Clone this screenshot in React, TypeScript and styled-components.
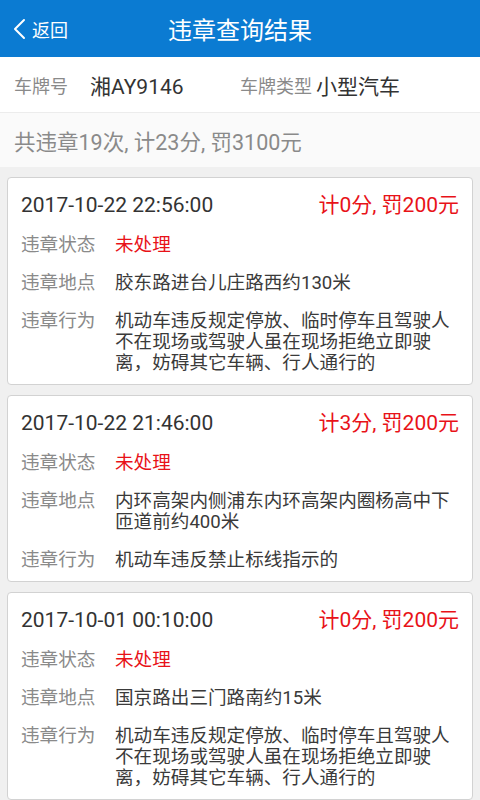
import styled, { createGlobalStyle } from "styled-components";

type Violation = {
  time: string;
  points: number;
  fine: number;
  status: string;
  place: string;
  action: string;
};

const VIOLATIONS: Violation[] = [
  {
    time: "2017-10-22 22:56:00",
    points: 0,
    fine: 200,
    status: "未处理",
    place: "胶东路进台儿庄路西约130米",
    action:
      "机动车违反规定停放、临时停车且驾驶人不在现场或驾驶人虽在现场拒绝立即驶离，妨碍其它车辆、行人通行的",
  },
  {
    time: "2017-10-22 21:46:00",
    points: 3,
    fine: 200,
    status: "未处理",
    place: "内环高架内侧浦东内环高架内圈杨高中下匝道前约400米",
    action: "机动车违反禁止标线指示的",
  },
  {
    time: "2017-10-01 00:10:00",
    points: 0,
    fine: 200,
    status: "未处理",
    place: "国京路出三门路南约15米",
    action:
      "机动车违反规定停放、临时停车且驾驶人不在现场或驾驶人虽在现场拒绝立即驶离，妨碍其它车辆、行人通行的",
  },
];

const GlobalStyle = createGlobalStyle`
  html, body {
    margin: 0;
    padding: 0;
    background: #f0f0f0;
  }
  body {
    font-family: Roboto, "Noto Sans CJK SC", sans-serif;
    -webkit-font-smoothing: antialiased;
  }
`;

const Page = styled.div`
  width: 480px;
  min-height: 800px;
  background: #f0f0f0;
`;

const Header = styled.header`
  height: 57px;
  background: #0b7bd2;
  display: flex;
  align-items: center;
  justify-content: center;
  position: relative;
  color: #fff;
`;

const BackButton = styled.div`
  position: absolute;
  left: 12px;
  top: 0;
  bottom: 0;
  display: flex;
  align-items: center;
  gap: 6px;
  font-size: 18px;
`;

const Title = styled.h1`
  margin: 0;
  font-size: 24px;
  font-weight: 400;
`;

const PlateBar = styled.div`
  height: 55px;
  background: #fff;
  display: flex;
  align-items: center;
  padding: 0 14px;
`;

const PlateItem = styled.div<{ $width?: number }>`
  display: flex;
  align-items: center;
  width: ${({ $width }) => ($width ? `${$width}px` : "auto")};
`;

const PlateLabel = styled.span<{ $gap: number }>`
  font-size: 18px;
  color: #8a8a8a;
  margin-right: ${({ $gap }) => $gap}px;
`;

const PlateValue = styled.span`
  font-size: 21px;
  color: #333;
`;

const Summary = styled.div`
  height: 54px;
  border-top: 1px solid #ececec;
  background: #fafafa;
  display: flex;
  align-items: center;
  padding: 0 14px;
  font-size: 21.5px;
  color: #8a8a8a;
`;

const List = styled.div`
  display: flex;
  flex-direction: column;
  gap: 10px;
  padding: 10px 7px 4px;
`;

const Card = styled.div`
  background: #fff;
  border: 1px solid #d2d2d2;
  border-radius: 4px;
  padding: 15px 13px 10px;
  display: flex;
  flex-direction: column;
  gap: 17px;
`;

const CardTop = styled.div`
  display: flex;
  justify-content: space-between;
  align-items: center;
  line-height: 25px;
  font-size: 21px;
`;

const Time = styled.span`
  color: #333;
`;

const Penalty = styled.span`
  color: #e81218;
`;

const Row = styled.div`
  display: grid;
  grid-template-columns: 94px 1fr;
  font-size: 18.6px;
  line-height: 21px;
`;

const Label = styled.span`
  color: #8a8a8a;
`;

const Value = styled.span<{ $alert?: boolean }>`
  color: ${({ $alert }) => ($alert ? "#e81218" : "#3a3a3a")};
`;

const ChevronLeft = () => (
  <svg width="14" height="22" viewBox="0 0 14 22" fill="none">
    <path d="M12 2 L3 11 L12 20" stroke="#fff" strokeWidth="2" strokeLinecap="round" strokeLinejoin="round" />
  </svg>
);

const ViolationCard = ({ v }: { v: Violation }) => (
  <Card>
    <CardTop>
      <Time>{v.time}</Time>
      <Penalty>
        计{v.points}分, 罚{v.fine}元
      </Penalty>
    </CardTop>
    <Row>
      <Label>违章状态</Label>
      <Value $alert>{v.status}</Value>
    </Row>
    <Row>
      <Label>违章地点</Label>
      <Value>{v.place}</Value>
    </Row>
    <Row>
      <Label>违章行为</Label>
      <Value>{v.action}</Value>
    </Row>
  </Card>
);

export default function App() {
  return (
    <Page>
      <GlobalStyle />
      <Header>
        <BackButton>
          <ChevronLeft />
          <span>返回</span>
        </BackButton>
        <Title>违章查询结果</Title>
      </Header>
      <PlateBar>
        <PlateItem $width={226}>
          <PlateLabel $gap={22}>车牌号</PlateLabel>
          <PlateValue>湘AY9146</PlateValue>
        </PlateItem>
        <PlateItem>
          <PlateLabel $gap={4}>车牌类型</PlateLabel>
          <PlateValue>小型汽车</PlateValue>
        </PlateItem>
      </PlateBar>
      <Summary>共违章19次, 计23分, 罚3100元</Summary>
      <List>
        {VIOLATIONS.map((v) => (
          <ViolationCard key={v.time} v={v} />
        ))}
      </List>
    </Page>
  );
}
